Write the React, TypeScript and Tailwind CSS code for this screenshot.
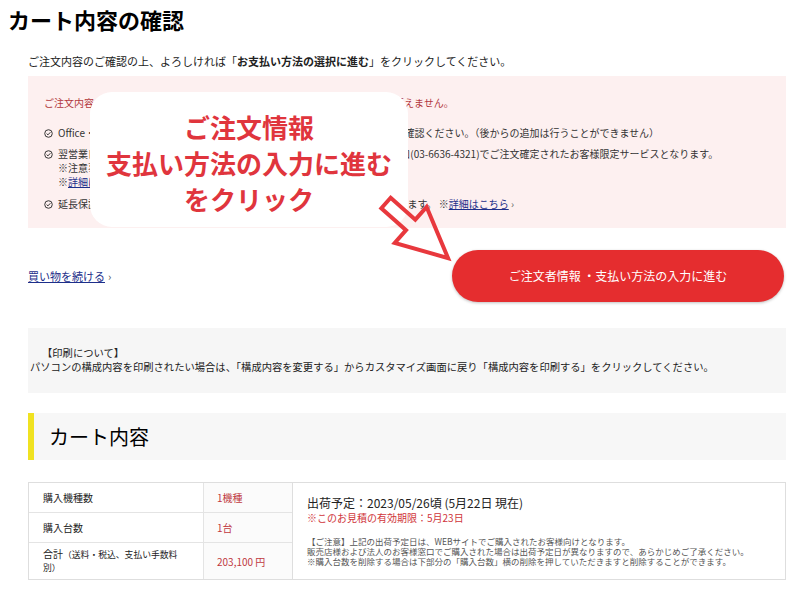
import React from "react";

const CheckIcon = () => (
  <svg width="9" height="9" viewBox="0 0 10 10" className="shrink-0 mt-[2.5px]">
    <circle cx="5" cy="5" r="4.2" fill="none" stroke="#333" strokeWidth="1.1" />
    <path d="M2.9 5.1 L4.4 6.5 L7.1 3.6" fill="none" stroke="#333" strokeWidth="1.1" />
  </svg>
);

export default function App() {
  const jp = { fontFamily: '"Noto Sans CJK JP", "Noto Sans", sans-serif' };

  return (
    <div style={jp} className="relative w-[798px] h-[600px] overflow-hidden bg-white text-[#222]">
      {/* Page title */}
      <h1 className="pl-[8px] mt-[5px] text-[22px] leading-[28px] font-bold text-black">カート内容の確認</h1>

      <div className="ml-[28px] mr-[12px]">
        <p className="mt-[20px] text-[11px] leading-[16px] text-[#222]">
          ご注文内容のご確認の上、よろしければ「<span className="font-bold">お支払い方法の選択に進む</span>」をクリックしてください。
        </p>

        {/* Notice box */}
        <div className="mt-[7px] bg-[#fdf0f0] pl-[16px] pr-[16px] pt-[20px] pb-[17px]">
          <p className="text-[10px] leading-[14px] text-[#b2373d]">
            ご注文内容の確定後は、ご注文内容の変更・キャンセル・オプションの追加は行えません。
          </p>
          <div className="mt-[16px] flex flex-col gap-[7px] text-[10px] leading-[14px] text-[#333]">
            <div className="flex gap-[5px]">
              <CheckIcon />
              <span>Office・セキュリティソフト等のオプションは、注文前に必ずカート内容をご確認ください。（後からの追加は行うことができません）</span>
            </div>
            <div className="flex gap-[5px]">
              <CheckIcon />
              <div className="flex flex-col">
                <span>翌営業日出荷サービスは、平日15時までに当社WEBサイトもしくはお電話窓口(03-6636-4321)でご注文確定されたお客様限定サービスとなります。</span>
                <span>※注意事項：一部対象外の製品がございます。</span>
                <span>※<a className="text-[#1d2f8a] underline">詳細はこちら</a></span>
              </div>
            </div>
            <div className="flex gap-[5px] mt-[1px]">
              <CheckIcon />
              <span>
                延長保証サービスは、本体と同時にご注文いただいた場合のみ加入可能となります。 ※<a className="text-[#1d2f8a] underline">詳細はこちら</a>
                <span className="text-[#666]"> ›</span>
              </span>
            </div>
          </div>
        </div>

        {/* Actions */}
        <div className="mt-[22px] flex items-center justify-between">
          <a className="text-[11px] text-[#1d2f8a] underline">
            買い物を続ける<span className="no-underline text-[#555] ml-[3px] inline-block">›</span>
          </a>
          <button className="mr-[2px] w-[332px] h-[52px] rounded-full bg-[#e52d2f] text-white text-[12px] font-normal shadow-[0_1px_3px_rgba(0,0,0,0.25)]">
            ご注文者情報 ・支払い方法の入力に進む
          </button>
        </div>

        {/* Print note */}
        <div className="mt-[26px] bg-[#f6f6f6] pl-[2px] pt-[18px] pb-[19px] text-[10.3px] leading-[14px] text-[#222]">
          <p className="pl-[12px]">【印刷について】</p>
          <p>パソコンの構成内容を印刷されたい場合は、「構成内容を変更する」からカスタマイズ画面に戻り「構成内容を印刷する」をクリックしてください。</p>
        </div>

        {/* Section heading */}
        <div className="mt-[20px] h-[47px] bg-[#f7f7f7] border-l-[6px] border-[#f0e221] flex items-center pl-[15px]">
          <h2 className="text-[20px] text-black">カート内容</h2>
        </div>

        {/* Summary table */}
        <div className="mt-[22px] flex h-[98px]">
          <div className="w-[265px] border border-[#dedede] grid grid-cols-[175px_1fr] grid-rows-[30px_30px_1fr] text-[10px]">
            <div className="flex items-center pl-[14px] border-b border-r border-[#e4e4e4] text-[#222]">購入機種数</div>
            <div className="flex items-center pl-[13px] border-b border-[#e4e4e4] text-[#c0393f] bg-[#fbfbfb]">1機種</div>
            <div className="flex items-center pl-[14px] border-b border-r border-[#e4e4e4] text-[#222]">購入台数</div>
            <div className="flex items-center pl-[13px] border-b border-[#e4e4e4] text-[#c0393f] bg-[#fbfbfb]">1台</div>
            <div className="flex items-center pl-[14px] pr-[18px] border-r border-[#e4e4e4] text-[#222] leading-[12px]">
              <span>合計<span className="text-[8.8px]">（送料・税込、支払い手数料別）</span></span>
            </div>
            <div className="flex items-center pl-[13px] text-[#c0393f] bg-[#fbfbfb]">203,100 円</div>
          </div>
          <div className="flex-1 border border-l-0 border-[#dedede] pl-[14px] pt-[12px]">
            <p className="text-[12px] leading-[16px] text-[#222]">出荷予定：2023/05/26頃 (5月22日 現在)</p>
            <p className="text-[10px] leading-[14px] text-[#d0353b]">※このお見積の有効期限：5月23日</p>
            <div className="mt-[11px] text-[8.5px] leading-[10px] text-[#555]">
              <p>【ご注意】上記の出荷予定日は、WEBサイトでご購入されたお客様向けとなります。</p>
              <p>販売店様および法人のお客様窓口でご購入された場合は出荷予定日が異なりますので、あらかじめご了承ください。</p>
              <p>※購入台数を削除する場合は下部分の「購入台数」横の削除を押していただきますと削除することができます。</p>
            </div>
          </div>
        </div>
      </div>

      {/* Callout overlay */}
      <div className="absolute left-[90px] top-[92px] w-[318px] h-[135px] rounded-[22px] bg-white pt-[17px] flex flex-col items-center text-[#e0353d] text-[26px] leading-[36px] font-bold">
        <span>ご注文情報</span>
        <span>支払い方法の入力に進む</span>
        <span>をクリック</span>
      </div>

      {/* Arrow */}
      <svg className="absolute left-0 top-0 pointer-events-none" width="798" height="600">
        <polygon
          points="0,-7 33,-7 33,-24 83,0 33,24 33,7 0,7"
          transform="translate(386 203) rotate(41.6)"
          fill="none"
          stroke="#e8383d"
          strokeWidth="4"
          strokeLinejoin="miter"
        />
      </svg>
    </div>
  );
}
